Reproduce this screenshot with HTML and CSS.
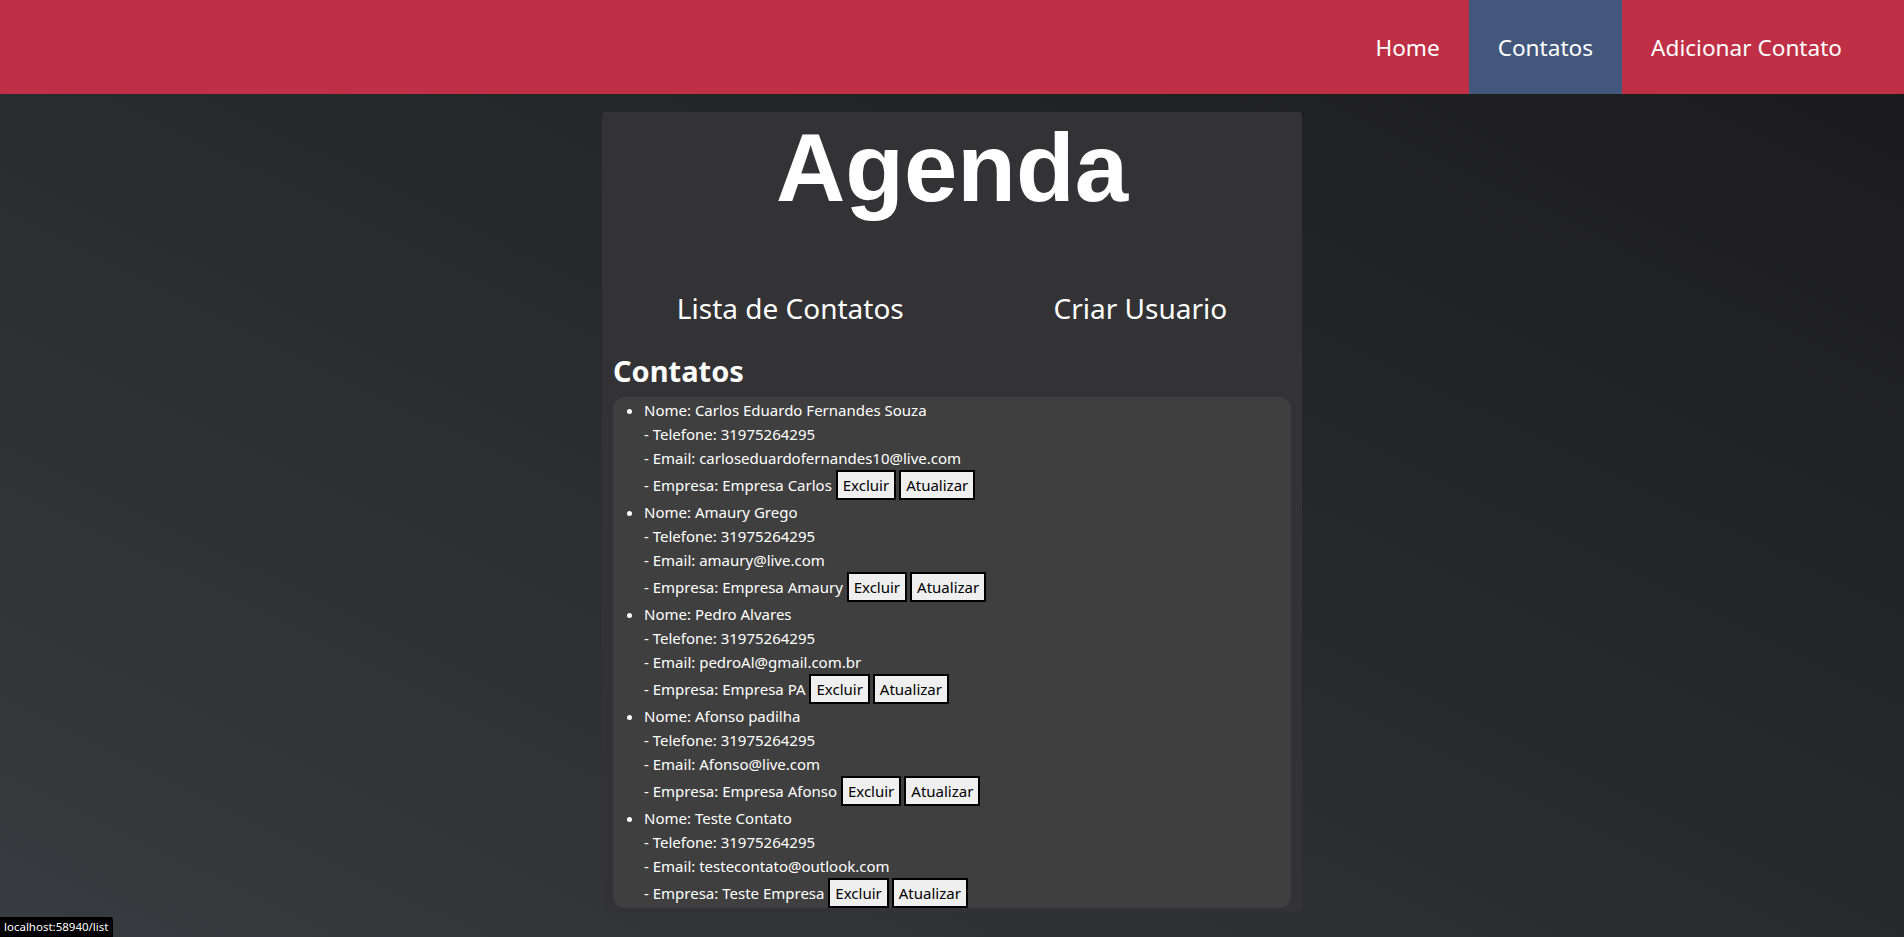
FILE: index.html
```html
<!DOCTYPE html>
<html lang="pt-BR">
<head>
<meta charset="utf-8">
<title>Agenda</title>
<link rel="stylesheet" href="styles.css">
</head>
<body>
<header class="navbar">
  <nav class="nav">
    <a class="nav-item" href="#">Home</a>
    <a class="nav-item active" href="#">Contatos</a>
    <a class="nav-item" href="#">Adicionar Contato</a>
  </nav>
</header>
<main class="card">
  <h1 class="title">Agenda</h1>
  <div class="links">
    <a class="link" href="#">Lista de Contatos</a>
    <a class="link" href="#">Criar Usuario</a>
  </div>
  <h2 class="section-title">Contatos</h2>
  <ul class="contacts">
    <li class="contact">
      <div class="line">Nome: Carlos Eduardo Fernandes Souza</div>
      <div class="line">- Telefone: 31975264295</div>
      <div class="line">- Email: carloseduardofernandes10@live.com</div>
      <div class="line">- Empresa: Empresa Carlos <button class="btn">Excluir</button><button class="btn">Atualizar</button></div>
    </li>
    <li class="contact">
      <div class="line">Nome: Amaury Grego</div>
      <div class="line">- Telefone: 31975264295</div>
      <div class="line">- Email: amaury@live.com</div>
      <div class="line">- Empresa: Empresa Amaury <button class="btn">Excluir</button><button class="btn">Atualizar</button></div>
    </li>
    <li class="contact">
      <div class="line">Nome: Pedro Alvares</div>
      <div class="line">- Telefone: 31975264295</div>
      <div class="line">- Email: pedroAl@gmail.com.br</div>
      <div class="line">- Empresa: Empresa PA <button class="btn">Excluir</button><button class="btn">Atualizar</button></div>
    </li>
    <li class="contact">
      <div class="line">Nome: Afonso padilha</div>
      <div class="line">- Telefone: 31975264295</div>
      <div class="line">- Email: Afonso@live.com</div>
      <div class="line">- Empresa: Empresa Afonso <button class="btn">Excluir</button><button class="btn">Atualizar</button></div>
    </li>
    <li class="contact">
      <div class="line">Nome: Teste Contato</div>
      <div class="line">- Telefone: 31975264295</div>
      <div class="line">- Email: testecontato@outlook.com</div>
      <div class="line">- Empresa: Teste Empresa <button class="btn">Excluir</button><button class="btn">Atualizar</button></div>
    </li>
  </ul>
</main>
<div class="status">localhost:58940/list</div>
</body>
</html>
```

FILE: styles.css
```css
html {
  height: 100%;
}

body {
  margin: 0;
  min-height: 100%;
  background: linear-gradient(to top right, #383b3f 0%, #2a2b2e 45%, #1a1a1c 100%);
  font-family: "Segoe UI", "Noto Sans", sans-serif;
  color: #ffffff;
  overflow: hidden;
}

.navbar {
  height: 94px;
  background: #bf3046;
  display: flex;
  justify-content: flex-end;
  padding-right: 33px;
}

.nav {
  display: flex;
}

.nav-item {
  display: block;
  padding: 1px 29px 0;
  line-height: 93px;
  font-size: 22.6px;
  color: #ffffff;
  text-decoration: none;
}

.nav-item.active {
  background: #43577c;
}

.card {
  width: 700px;
  box-sizing: border-box;
  margin: 18px auto 0;
  padding: 1px 11px 4px;
  background: #333335;
  border-radius: 4px;
}

.title {
  margin: 0;
  font-family: "Liberation Sans", Arial, sans-serif;
  font-weight: bold;
  font-size: 96px;
  line-height: 110px;
  text-align: center;
}

.links {
  display: flex;
  justify-content: space-around;
  margin: 66px -11px 0;
}

.link {
  font-size: 28px;
  color: #ffffff;
  text-decoration: none;
}

.section-title {
  margin: 24px 0 7px;
  font-size: 29px;
  font-weight: bold;
}

.contacts {
  margin: 0;
  padding: 1px 0 0 31px;
  background: #3f3f3f;
  border-radius: 12px;
  font-size: 15px;
  line-height: 24px;
}

.btn {
  font-family: "Segoe UI", "Noto Sans", sans-serif;
  font-size: 15px;
  line-height: 20px;
  padding: 3px 5px;
  margin: 0;
  border: 2px solid #000000;
  border-radius: 0;
  background: #efefef;
  color: #000000;
}

.btn + .btn {
  margin-left: 3px;
}

.status {
  position: fixed;
  left: 0;
  bottom: 0;
  padding: 2px 5px 3px 4px;
  background: #000000;
  color: #ffffff;
  font-size: 11.5px;
  line-height: 15px;
  border-top-right-radius: 3px;
}
```
